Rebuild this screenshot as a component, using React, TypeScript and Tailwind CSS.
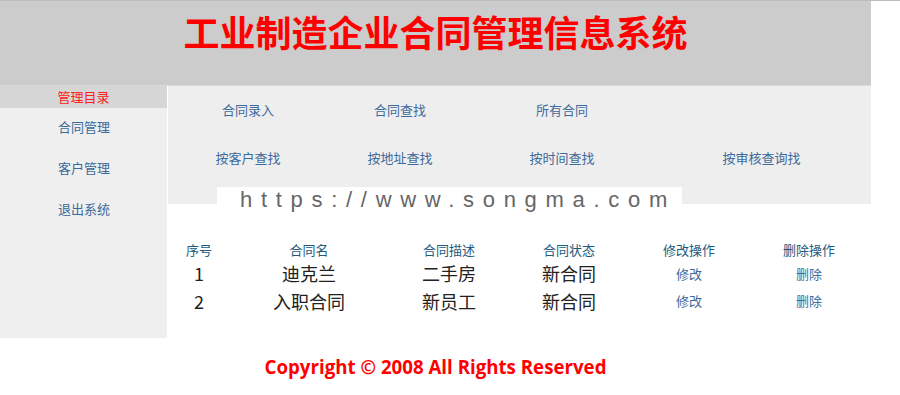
import React from 'react';

const cjk = "font-['Noto_Sans_CJK_SC','Noto_Sans',sans-serif]";

const sideItems = ['合同管理', '客户管理', '退出系统'];

const navRows = [
  ['合同录入', '合同查找', '所有合同', ''],
  ['按客户查找', '按地址查找', '按时间查找', '按审核查询找'],
];

const heads = ['序号', '合同名', '合同描述', '合同状态', '修改操作', '删除操作'];

const rows = [
  { id: '1', name: '迪克兰', desc: '二手房', status: '新合同' },
  { id: '2', name: '入职合同', desc: '新员工', status: '新合同' },
];

const cols = 'grid grid-cols-[62px_158px_122px_118px_122px_118px]';

const App: React.FC = () => {
  return (
    <div className={`relative min-h-[395px] border-t border-[#bdbdbd] bg-white ${cjk}`}>
      <div className="w-[871px]">
        {/* header */}
        <div className="h-[84px] bg-[#cccccc] pt-[8px] text-center">
          <h1 className="text-[36px] font-bold leading-[44px] text-[#ff0000]">
            工业制造企业合同管理信息系统
          </h1>
        </div>
        <div className="h-px bg-[#dadada]" />

        <div className="flex">
          {/* sidebar */}
          <div className="w-[167px] h-[252px] bg-[#efefef] mr-px">
            <div className="h-[22px] bg-[#d6d6d6] text-center text-[13px] leading-[21px] text-[#ff2020]">
              管理目录
            </div>
            <div className="pt-[8px] flex flex-col gap-[20px]">
              {sideItems.map((s) => (
                <a key={s} className="block pl-[58px] text-[13px] leading-[21px] text-[#3c6a9c]">
                  {s}
                </a>
              ))}
            </div>
          </div>

          {/* main */}
          <div className="flex-1">
            <div className="h-[118px] bg-[#eeeeee]">
              {navRows.map((r, i) => (
                <div key={i} className="grid grid-cols-[160px_144px_180px_219px] h-[48px] items-center">
                  {r.map((t, j) => (
                    <a key={j} className="text-center text-[13px] text-[#3c6a9c]">
                      {t}
                    </a>
                  ))}
                </div>
              ))}
            </div>

            <div className="pt-[35px]">
              <div className={`${cols} h-[21px] items-center`}>
                {heads.map((h) => (
                  <div key={h} className="text-center text-[13px] text-[#1d5a7e]">
                    {h}
                  </div>
                ))}
              </div>
              {rows.map((r, i) => (
                <div key={r.id} className={`${cols} ${i === 0 ? 'h-[26px]' : 'h-[30px]'} items-center`}>
                  <div className="text-center text-[18px] text-[#222]">{r.id}</div>
                  <div className="text-center text-[18px] text-[#222]">{r.name}</div>
                  <div className="text-center text-[18px] text-[#222]">{r.desc}</div>
                  <div className="text-center text-[18px] text-[#222]">{r.status}</div>
                  <a className="text-center text-[13px] text-[#3c6a9c]">修改</a>
                  <a className="text-center text-[13px] text-[#3c6a9c]">删除</a>
                </div>
              ))}
            </div>
          </div>
        </div>

        {/* footer */}
        <div className="h-[56px] pt-[15px] text-center">
          <p className="font-['Open_Sans',sans-serif] text-[18.7px] font-bold text-[#ff0000]">
            Copyright © 2008 All Rights Reserved
          </p>
        </div>
      </div>

      {/* watermark overlay */}
      <div className="absolute left-[217px] top-[186px] h-[25px] w-[465px] bg-white pl-[23px] font-['Liberation_Sans',sans-serif] text-[22px] leading-[25px] tracking-[8.7px] text-[#666666]">
        https://www.songma.com
      </div>
    </div>
  );
};

export default App;
